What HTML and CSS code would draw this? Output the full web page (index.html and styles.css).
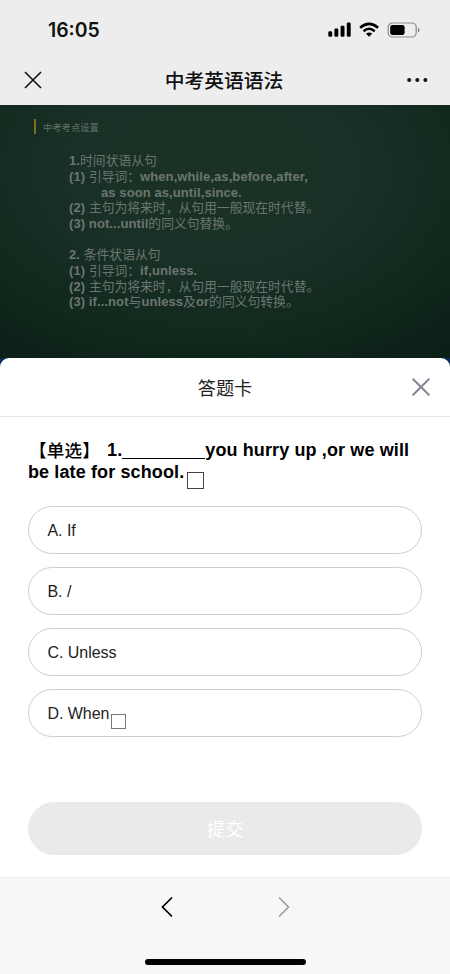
FILE: index.html
```html
<!DOCTYPE html>
<html lang="zh-CN">
<head>
<meta charset="utf-8">
<title>中考英语语法</title>
<link rel="stylesheet" href="styles.css">
</head>
<body>
<div class="phone">
  <header class="top">
    <div class="status">
      <span class="clock">16:05</span>
      <svg class="status-icons" width="92" height="16" viewBox="0 0 92 16">
        <rect x="0.3" y="9.3" width="3.9" height="5.5" rx="1.2"/>
        <rect x="6.4" y="6.5" width="3.9" height="8.3" rx="1.2"/>
        <rect x="12.6" y="3.7" width="3.9" height="11.1" rx="1.2"/>
        <rect x="18.8" y="0.6" width="3.9" height="14.2" rx="1.2"/>
        <g fill="none" stroke="#000" stroke-width="2.5">
          <path d="M32.1 5.7Q41.1 -2 50.1 5.7"/>
          <path d="M35.5 9.2Q41.1 4.4 46.7 9.2"/>
        </g>
        <path d="M38 11.7Q41.1 9.1 44.2 11.7L41.1 14.8Z"/>
        <rect x="60.2" y="1" width="28" height="14" rx="4.2" fill="none" stroke="#8b8b8b" stroke-width="1.2"/>
        <rect x="62.2" y="2.9" width="14.4" height="10.2" rx="2.3"/>
        <path d="M89.9 5.6Q91.6 6.3 91.6 8T89.9 10.4Z" fill="#8b8b8b"/>
      </svg>
    </div>
    <div class="nav">
      <svg width="18" height="18" viewBox="0 0 18 18" fill="none" stroke="#111" stroke-width="1.6"><path d="M1 1L17 17M17 1L1 17"/></svg>
      <h1>中考英语语法</h1>
      <svg width="22" height="6" viewBox="0 0 22 6" fill="#111"><circle cx="3.2" cy="3" r="2"/><circle cx="11.3" cy="3" r="2"/><circle cx="19.4" cy="3" r="2"/></svg>
    </div>
  </header>

  <section class="board">
    <div class="board-title">中考考点设置</div>
    <div class="notes">
      <p>1.<i>时间状语从句</i></p>
      <p>(1) <i>引导词：</i>when,while,as,before,after,</p>
      <p class="indent">as soon as,until,since.</p>
      <p>(2) <i>主句为将来时，从句用一般现在时代替。</i></p>
      <p>(3) not...until<i>的同义句替换。</i></p>
    </div>
    <div class="notes">
      <p>2. <i>条件状语从句</i></p>
      <p>(1) <i>引导词：</i>if,unless.</p>
      <p>(2) <i>主句为将来时，从句用一般现在时代替。</i></p>
      <p>(3) if...not<i>与</i>unless<i>及</i>or<i>的同义句转换。</i></p>
    </div>
    <svg class="watermark" width="20" height="24" viewBox="0 0 20 24" fill="none" stroke="#1a3327" stroke-width="1"><circle cx="10" cy="10" r="8"/><path d="M5 5L15 15M6 22H14"/></svg>
  </section>

  <div class="sheet-wrap">
    <main class="sheet">
      <div class="sheet-head">
        <h2>答题卡</h2>
        <svg class="close" width="18" height="18" viewBox="0 0 18 18" fill="none" stroke="#858594" stroke-width="2" stroke-linecap="round"><path d="M1.2 1.2L16.8 16.8M16.8 1.2L1.2 16.8"/></svg>
      </div>
      <div class="question">
        <p class="q1"><span class="tag">【单选】</span><span class="num">1.</span><span class="blank"></span><span>you hurry up ,or we will</span></p>
        <p class="q2"><span>be late for school.</span><span class="box"></span></p>
      </div>
      <div class="options">
        <div class="option">A. If</div>
        <div class="option">B. /</div>
        <div class="option">C. Unless</div>
        <div class="option">D. When<span class="box small"></span></div>
      </div>
      <div class="submit">提交</div>
    </main>
  </div>

  <footer class="bottom">
    <div class="arrows">
      <svg width="12" height="20" viewBox="0 0 12 20" fill="none" stroke="#000" stroke-width="1.7" stroke-linecap="round"><path d="M10.5 1L1.5 10L10.5 19"/></svg>
      <svg width="12" height="20" viewBox="0 0 12 20" fill="none" stroke="#999" stroke-width="1.5" stroke-linecap="round"><path d="M1.5 1L10.5 10L1.5 19"/></svg>
    </div>
    <div class="home"></div>
  </footer>
</div>
</body>
</html>
```
FILE: styles.css
```css
* { box-sizing: border-box; margin: 0; padding: 0; }
body { background: #fff; font-family: "Liberation Sans", "Noto Sans CJK SC", sans-serif; color: #111; }
.phone { width: 450px; height: 974px; display: flex; flex-direction: column; overflow: hidden; }

.top { height: 105px; background: #ededed; }
.status { height: 56px; padding: 4px 30px 0 48px; display: flex; align-items: center; justify-content: space-between; }
.clock { font: 600 19.4px/24px Inter, sans-serif; color: #111; }
.nav { height: 48px; padding: 0 22px 0 24px; display: flex; align-items: center; justify-content: space-between; }
.nav h1 { font: 500 19.8px/28px "Noto Sans CJK SC", sans-serif; padding-bottom: 1px; }

.board { height: 253px; padding: 14px 0 0 34px; color: #6c7670; overflow: hidden;
  background: radial-gradient(ellipse 420px 280px at 47% 25%, #1c3226 0%, #183026 35%, #10271c 65%, #071a13 100%); }
.board-title { height: 15px; border-left: 2px solid #806b20; padding-left: 7px; font: 9.3px/16px "Noto Sans CJK SC", sans-serif; color: #65716a; }
.notes { margin: 19px 0 0 35px; font-size: 13px; font-weight: 700; letter-spacing: .09px; white-space: nowrap; }
.notes + .notes { margin-top: 15px; }
.notes p { height: 15.8px; line-height: 15.8px; display: flex; align-items: center; white-space: pre; }
.notes i { display: block; height: 15.8px; font: 400 12.8px/13px "Noto Sans CJK SC", sans-serif; letter-spacing: 0; }
.notes .indent { padding-left: 32px; }
.watermark { display: block; margin: 3px 0 0 207px; opacity: .6; }

.sheet-wrap { height: 519px; background: #0c2a5a; }
.sheet { height: 519px; background: #fff; border-radius: 9px 9px 0 0; }
.sheet-head { position: relative; height: 59px; border-bottom: 1px solid #e9e9e9; display: flex; align-items: center; justify-content: center; }
.sheet-head h2 { font: 400 18.2px/28px "Noto Sans CJK SC", sans-serif; color: #222; }
.close { position: absolute; right: 20px; top: 20px; }

.question { height: 89px; padding: 22px 28px 0; font-size: 18px; letter-spacing: .12px; font-weight: 700; color: #000; white-space: nowrap; }
.question p { display: flex; height: 22px; line-height: 22px; }
.tag { font: 500 17.6px/22px "Noto Sans CJK SC", sans-serif; width: 79px; padding-left: 1px; }
.blank { width: 83px; height: 20px; border-bottom: 1.5px solid #000; }
.box { width: 17px; height: 17px; border: 1px solid #444; margin: 11px 0 0 3px; flex: none; }
.box.small { width: 15px; height: 15px; margin: 15px 0 0 2px; border-color: #777; }

.options { padding: 0 28px; display: flex; flex-direction: column; gap: 13px; }
.option { height: 48px; border: 1px solid #c9d1d1; border-radius: 24px; padding: 1px 0 0 18.5px; display: flex; align-items: center; font-size: 16px; letter-spacing: -.05px; color: #222; }
.submit { margin: 65px 28px 0; height: 53px; border-radius: 27px; background: #e9eaec; color: #fff; text-align: center; font: 400 18.3px/53px "Noto Sans CJK SC", sans-serif; }

.bottom { height: 97px; background: #f7f7f7; border-top: 1px solid #eee; padding-top: 19px; }
.arrows { display: flex; justify-content: center; gap: 105px; }
.home { width: 161px; height: 6px; margin: 42px auto 0; border-radius: 3px; background: #000; }
```
